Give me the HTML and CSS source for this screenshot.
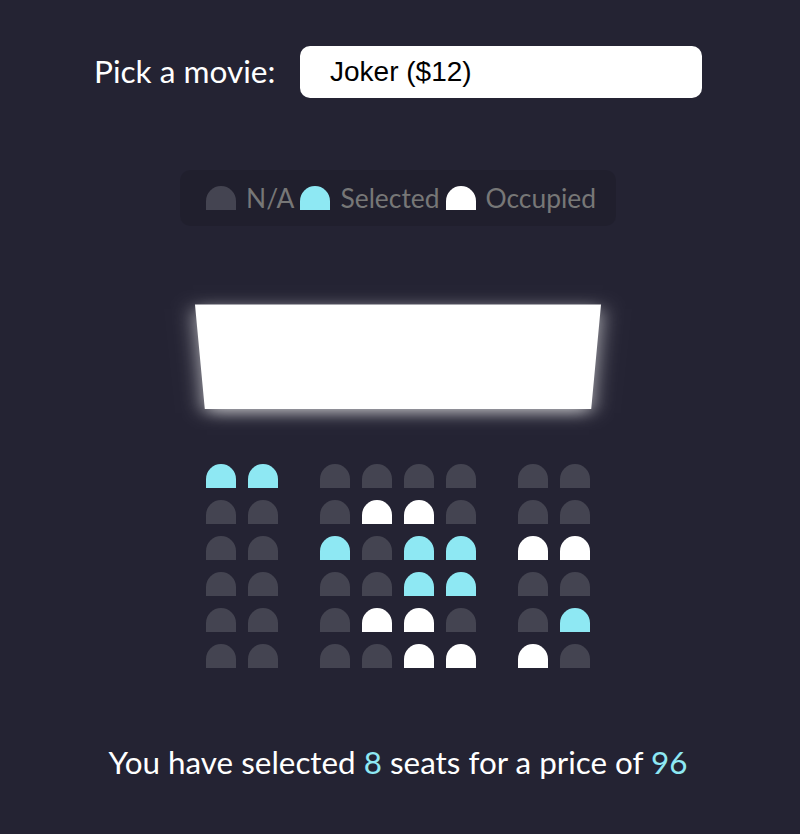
FILE: index.html
```html
<!DOCTYPE html>
<html lang="en">
<head>
<meta charset="UTF-8">
<title>Movie Seat Booking</title>
<link rel="stylesheet" href="styles.css">
</head>
<body>
  <div class="movie-container">
    <label class="movie-label">Pick a movie:</label>
    <div class="movie-select">Joker ($12)</div>
  </div>

  <ul class="showcase">
    <li class="showcase-item"><div class="seat"></div><small class="showcase-text">N/A</small></li>
    <li class="showcase-item"><div class="seat selected"></div><small class="showcase-text">Selected</small></li>
    <li class="showcase-item"><div class="seat occupied"></div><small class="showcase-text">Occupied</small></li>
  </ul>

  <div class="container">
    <div class="screen"></div>
    <div class="row">
      <div class="seat selected"></div><div class="seat selected"></div><div class="seat"></div><div class="seat"></div><div class="seat"></div><div class="seat"></div><div class="seat"></div><div class="seat"></div>
    </div>
    <div class="row">
      <div class="seat"></div><div class="seat"></div><div class="seat"></div><div class="seat occupied"></div><div class="seat occupied"></div><div class="seat"></div><div class="seat"></div><div class="seat"></div>
    </div>
    <div class="row">
      <div class="seat"></div><div class="seat"></div><div class="seat selected"></div><div class="seat"></div><div class="seat selected"></div><div class="seat selected"></div><div class="seat occupied"></div><div class="seat occupied"></div>
    </div>
    <div class="row">
      <div class="seat"></div><div class="seat"></div><div class="seat"></div><div class="seat"></div><div class="seat selected"></div><div class="seat selected"></div><div class="seat"></div><div class="seat"></div>
    </div>
    <div class="row">
      <div class="seat"></div><div class="seat"></div><div class="seat"></div><div class="seat occupied"></div><div class="seat occupied"></div><div class="seat"></div><div class="seat"></div><div class="seat selected"></div>
    </div>
    <div class="row">
      <div class="seat"></div><div class="seat"></div><div class="seat"></div><div class="seat"></div><div class="seat occupied"></div><div class="seat occupied"></div><div class="seat occupied"></div><div class="seat"></div>
    </div>
  </div>

  <p class="text">You have selected <span class="count">8</span> seats for a price of <span class="total">96</span></p>
</body>
</html>
```
FILE: styles.css
```css
* {
  box-sizing: border-box;
}

html {
  background-color: #242333;
}

body {
  margin: 0;
  padding: 46px 4px 0 0;
  min-height: 834px;
  background-color: #242333;
  color: #fff;
  font-family: Lato, "Noto Sans", sans-serif;
  font-size: 32px;
  display: flex;
  flex-direction: column;
  align-items: center;
}

.movie-container {
  display: flex;
  align-items: center;
  height: 52px;
  margin-bottom: 72px;
}

.movie-label {
  width: 180px;
  white-space: nowrap;
  font-size: 31.6px;
  line-height: 1.2;
}

.movie-select {
  margin-left: 26px;
  width: 402px;
  height: 52px;
  padding: 10px 30px;
  background-color: #fff;
  color: #000;
  border-radius: 10px;
  font-family: "Liberation Sans", Arial, sans-serif;
  font-size: 28px;
  line-height: 32px;
}

.showcase {
  list-style: none;
  margin: 0;
  padding: 10px 20px;
  display: flex;
  justify-content: space-between;
  background-color: rgba(0, 0, 0, 0.1);
  border-radius: 10px;
  color: #777;
}

.showcase-item {
  display: flex;
  align-items: center;
  justify-content: center;
}

.showcase-text {
  font-size: 26.4px;
  margin-left: 4px;
}

.seat {
  background-color: #444451;
  width: 30px;
  height: 24px;
  margin: 6px;
  border-top-left-radius: 15px;
  border-top-right-radius: 15px;
}

.seat.selected {
  background-color: #8ee8f3;
}

.seat.occupied {
  background-color: #fff;
}

.container {
  perspective: 2000px;
  margin-top: 32px;
  margin-bottom: 60px;
}

.screen {
  background-color: #fff;
  height: 140px;
  width: 100%;
  margin: 30px 0;
  transform: rotateX(-45deg);
  box-shadow: 0 6px 20px rgba(255, 255, 255, 0.7);
}

.row {
  display: flex;
}

.row .seat:nth-of-type(2) {
  margin-right: 36px;
}

.row .seat:nth-last-of-type(2) {
  margin-left: 36px;
}

.text {
  margin: 10px 0 0;
  font-size: 31.4px;
  line-height: 1.2;
}

.count,
.total {
  color: #8ee8f3;
}
```
